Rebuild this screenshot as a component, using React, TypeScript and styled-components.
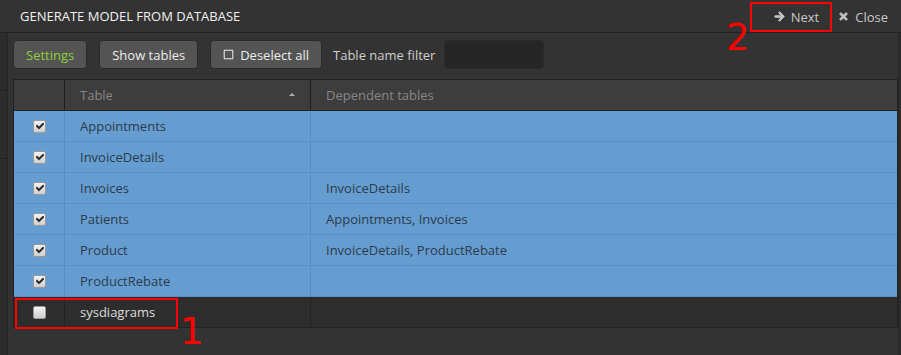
import styled, { createGlobalStyle } from "styled-components";
import { FaArrowRight, FaTimes, FaRegSquare, FaCheck } from "react-icons/fa";

const GlobalStyle = createGlobalStyle`
  html, body {
    margin: 0;
    padding: 0;
    background: #333333;
  }
  body {
    font-family: "Open Sans", "Liberation Sans", sans-serif;
    font-size: 13px;
  }
`;

const Dialog = styled.div`
  position: relative;
  width: 901px;
  height: 355px;
  display: flex;
  flex-direction: column;
  background: #333333;
  overflow: hidden;
`;

const TitleBar = styled.header`
  height: 32px;
  flex: none;
  display: flex;
  align-items: center;
  justify-content: space-between;
  padding: 0 13px 0 20px;
  border-bottom: 1px solid #222222;
`;

const Title = styled.h1`
  margin: 0;
  font-size: 13px;
  font-weight: 400;
  color: #f0f0f0;
`;

const Actions = styled.div`
  display: flex;
  align-items: center;
  gap: 19px;
  padding-top: 1px;
`;

const ActionLink = styled.span`
  display: inline-flex;
  align-items: center;
  gap: 6px;
  color: #c8c8c8;
  font-size: 13px;

  svg {
    font-size: 11px;
    color: #c4c4c4;
    stroke: currentColor;
    stroke-width: 40px;
  }
`;

const Body = styled.div`
  flex: 1;
  display: flex;
`;

const Gutter = styled.div<{ $side: "left" | "right" }>`
  flex: none;
  position: relative;
  background: #2c2c2c;
  width: ${(p) => (p.$side === "left" ? "7px" : "4px")};
  ${(p) =>
    p.$side === "left"
      ? "border-right: 1px solid #262626;"
      : "border-left: 1px solid #262626;"}
`;

const GutterLine = styled.div<{ $top: number }>`
  position: absolute;
  left: 0;
  right: 0;
  top: ${(p) => p.$top}px;
  height: 1px;
  background: #222222;
`;

const Main = styled.main`
  flex: 1;
  padding: 7px 0 0 5px;
  display: flex;
  flex-direction: column;
`;

const Toolbar = styled.div`
  display: flex;
  align-items: center;
  height: 29px;
`;

const Button = styled.button<{ $accent?: boolean }>`
  height: 29px;
  margin-right: 12px;
  padding: 0 12px;
  display: inline-flex;
  align-items: center;
  gap: 6px;
  background: #545454;
  border: 1px solid #2a2a2a;
  border-radius: 4px;
  font-family: inherit;
  font-size: 13px;
  color: ${(p) => (p.$accent ? "#90d03c" : "#ececec")};

  svg {
    font-size: 11px;
  }
`;

const FilterLabel = styled.span`
  color: #cfcfcf;
  margin-right: 9px;
  margin-left: -1px;
`;

const FilterInput = styled.div`
  width: 98px;
  height: 27px;
  background: #262626;
  border: 1px solid #2a2a2a;
  border-radius: 4px;
`;

const Grid = styled.div`
  margin-top: 10px;
  width: 883px;
  border-left: 1px solid #222222;
  border-right: 1px solid #222222;
`;

const Row = styled.div<{ $kind: "head" | "on" | "off" }>`
  display: grid;
  grid-template-columns: 51px 246px 1fr;
  height: 30px;
  background: ${(p) =>
    p.$kind === "head" ? "#3d3d3d" : p.$kind === "on" ? "#669dd0" : "#2d2d2d"};
  border-bottom: 1px solid
    ${(p) => (p.$kind === "on" ? "#5a8fc2" : "#222222")};
  ${(p) => (p.$kind === "head" ? "border-top: 1px solid #222222;" : "")}
  color: ${(p) =>
    p.$kind === "head" ? "#878787" : p.$kind === "on" ? "#2c3b4b" : "#dddddd"};
`;

const Cell = styled.div<{ $line: string; $center?: boolean }>`
  display: flex;
  align-items: center;
  justify-content: ${(p) => (p.$center ? "center" : "flex-start")};
  padding-left: ${(p) => (p.$center ? "0" : "15px")};
  border-right: 1px solid ${(p) => p.$line};
  position: relative;

  &:last-child {
    border-right: none;
  }
`;

const SortArrow = styled.span`
  position: absolute;
  right: 15px;
  top: 13px;
  width: 0;
  height: 0;
  border-left: 3px solid transparent;
  border-right: 3px solid transparent;
  border-bottom: 3px solid #b0b0b0;
`;

const Check = styled.span<{ $checked: boolean }>`
  width: 11px;
  height: 11px;
  margin-left: 1px;
  border: 1px solid #9a9a9a;
  border-radius: 2px;
  background: linear-gradient(#f2f2f2, #cfcfcf);
  display: inline-flex;
  align-items: center;
  justify-content: center;
  color: #2a2a2a;

  svg {
    font-size: 8px;
    stroke: currentColor;
    stroke-width: 50px;
    visibility: ${(p) => (p.$checked ? "visible" : "hidden")};
  }
`;

const Marker = styled.div<{ $x: number; $y: number; $w: number; $h: number }>`
  position: absolute;
  left: ${(p) => p.$x}px;
  top: ${(p) => p.$y}px;
  width: ${(p) => p.$w}px;
  height: ${(p) => p.$h}px;
  border: 2px solid #ff0000;
  box-sizing: border-box;
  pointer-events: none;
`;

const Digit = styled.span<{ $x: number; $y: number }>`
  position: absolute;
  left: ${(p) => p.$x}px;
  top: ${(p) => p.$y}px;
  font-family: "DejaVu Sans", sans-serif;
  font-size: 37px;
  line-height: 1;
  color: #ff0000;
`;

const rows = [
  { name: "Appointments", deps: "", on: true },
  { name: "InvoiceDetails", deps: "", on: true },
  { name: "Invoices", deps: "InvoiceDetails", on: true },
  { name: "Patients", deps: "Appointments, Invoices", on: true },
  { name: "Product", deps: "InvoiceDetails, ProductRebate", on: true },
  { name: "ProductRebate", deps: "", on: true },
  { name: "sysdiagrams", deps: "", on: false },
];

export default function App() {
  return (
    <>
      <GlobalStyle />
      <Dialog>
        <TitleBar>
          <Title>GENERATE MODEL FROM DATABASE</Title>
          <Actions>
            <ActionLink>
              <FaArrowRight />
              Next
            </ActionLink>
            <ActionLink>
              <FaTimes />
              Close
            </ActionLink>
          </Actions>
        </TitleBar>
        <Body>
          <Gutter $side="left">
            <GutterLine $top={57} />
            <GutterLine $top={125} />
          </Gutter>
          <Main>
            <Toolbar>
              <Button $accent>Settings</Button>
              <Button>Show tables</Button>
              <Button>
                <FaRegSquare />
                Deselect all
              </Button>
              <FilterLabel>Table name filter</FilterLabel>
              <FilterInput />
            </Toolbar>
            <Grid>
              <Row $kind="head">
                <Cell $line="#1e1e1e" $center />
                <Cell $line="#1e1e1e">
                  Table
                  <SortArrow />
                </Cell>
                <Cell $line="#1e1e1e">Dependent tables</Cell>
              </Row>
              {rows.map((r) => (
                <Row key={r.name} $kind={r.on ? "on" : "off"}>
                  <Cell $line={r.on ? "#5a8fc2" : "#222222"} $center>
                    <Check $checked={r.on}>
                      <FaCheck />
                    </Check>
                  </Cell>
                  <Cell $line={r.on ? "#5a8fc2" : "#222222"}>{r.name}</Cell>
                  <Cell $line={r.on ? "#5a8fc2" : "#222222"}>{r.deps}</Cell>
                </Row>
              ))}
            </Grid>
          </Main>
          <Gutter $side="right" />
        </Body>
        <Marker $x={750} $y={2} $w={82} $h={30} />
        <Digit $x={726} $y={19}>2</Digit>
        <Marker $x={15} $y={298} $w={163} $h={31} />
        <Digit $x={180} $y={313}>1</Digit>
      </Dialog>
    </>
  );
}
